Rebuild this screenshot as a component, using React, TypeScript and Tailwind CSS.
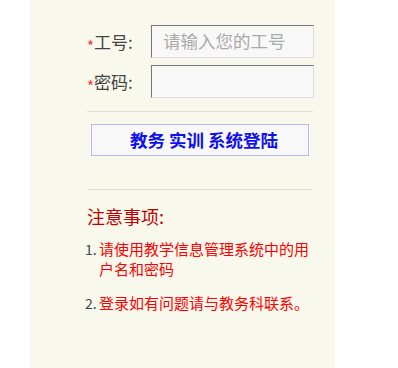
export default function App() {
  return (
    <div className="w-[398px] h-[368px] bg-white flex" style={{ fontFamily: '"Noto Sans CJK SC", "Noto Sans", sans-serif' }}>
      <div className="ml-[30px] w-[305px] h-[368px] bg-[#f8f8ec] pl-[57px] pr-[21px] pt-[25px]">
        <div className="flex flex-col gap-[7px]">
          <div className="flex items-center h-[33px]">
            <div className="w-[64px] flex items-center text-[17px] text-[#444]">
              <span className="text-[#f33] text-[15px] leading-none mt-[7px]">*</span>
              <span>工号:</span>
            </div>
            <div className="w-[163px] h-[33px] border border-t-[#777] border-l-[#777] border-b-[#ddd] border-r-[#ddd] bg-[#f8f8f8] flex items-center pl-[11px] text-[17.5px] text-[#aaa]">
              请输入您的工号
            </div>
          </div>
          <div className="flex items-center h-[33px]">
            <div className="w-[64px] flex items-center text-[17px] text-[#444]">
              <span className="text-[#f33] text-[15px] leading-none mt-[7px]">*</span>
              <span>密码:</span>
            </div>
            <div className="w-[163px] h-[33px] border border-t-[#777] border-l-[#777] border-b-[#ddd] border-r-[#ddd] bg-[#f8f8f8]"></div>
          </div>
        </div>
        <div className="mt-[13px] h-px bg-[#ddd] w-[226px]"></div>
        <div className="mt-[12px] ml-[4px] w-[218px] h-[32px] border border-[#b8b8f8] bg-[#f8f8f8] flex items-center justify-center pl-[8px] text-[17.5px] font-bold text-[#1010ee]">
          教务 实训 系统登陆
        </div>
        <div className="mt-[33px] h-px bg-[#ddd] w-[226px]"></div>
        <div className="mt-[14px] text-[18px] leading-[24px] text-[#c00000]">注意事项:</div>
        <ol className="mt-[11px] text-[15px] leading-[20px]">
          <li className="flex">
            <span className="w-[12px] shrink-0 text-[#445] -ml-[2px] mr-[2px] text-[14px]">1.</span>
            <span className="text-[#f00] w-[214px]">请使用教学信息管理系统中的用户名和密码</span>
          </li>
          <li className="flex mt-[14px]">
            <span className="w-[12px] shrink-0 text-[#445] -ml-[2px] mr-[2px] text-[14px]">2.</span>
            <span className="text-[#f00]">登录如有问题请与教务科联系。</span>
          </li>
        </ol>
      </div>
    </div>
  );
}
